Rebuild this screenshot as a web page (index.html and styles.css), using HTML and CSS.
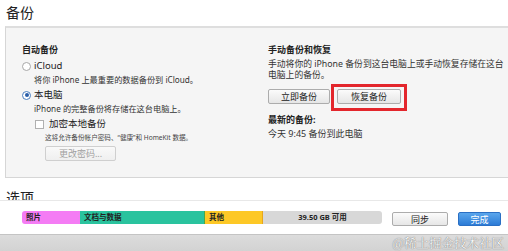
FILE: index.html
```html
<!DOCTYPE html>
<html lang="zh-CN">
<head>
    <meta charset="UTF-8">
    <meta name="viewport" content="width=device-width, initial-scale=1.0">
    <title>备份</title>
    <link rel="stylesheet" href="styles.css">
</head>
<body>
    <div class="view">
        <h1 class="page-title">备份</h1>

        <div class="panel">
            <div class="col col-auto">
                <h3 class="col-title">自动备份</h3>
                <div class="radio-row"><span class="radio"></span>iCloud</div>
                <p class="hint">将你 iPhone 上最重要的数据备份到 iCloud。</p>
                <div class="radio-row"><span class="radio on"></span>本电脑</div>
                <p class="hint">iPhone 的完整备份将存储在这台电脑上。</p>
                <div class="check-row"><span class="check"></span>加密本地备份</div>
                <p class="fine">这将允许备份帐户密码、“健康”和 HomeKit 数据。</p>
                <button class="btn btn-change" disabled>更改密码...</button>
            </div>

            <div class="col col-manual">
                <h3 class="col-title">手动备份和恢复</h3>
                <p class="desc">手动将你的 iPhone 备份到这台电脑上或手动恢复存储在这台电脑上的备份。</p>
                <div class="btn-row">
                    <button class="btn btn-backup">立即备份</button>
                    <span class="marked">
                        <button class="btn btn-restore">恢复备份</button>
                    </span>
                </div>
                <h3 class="col-title latest-title">最新的备份:</h3>
                <p class="latest">今天 9:45 备份到此电脑</p>
            </div>
        </div>

        <h1 class="page-title next-title">选项</h1>
    </div>

    <div class="footer">
        <div class="storage">
            <span class="seg seg-photo" style="width: 58px">照片</span>
            <span class="seg seg-docs" style="width: 125px">文档与数据</span>
            <span class="seg seg-other" style="width: 58px">其他</span>
            <span class="seg seg-free">39.50 GB 可用</span>
        </div>
        <button class="btn btn-sync">同步</button>
        <button class="btn btn-done">完成</button>
    </div>

    <div class="taskbar">
        <span class="watermark">@稀土掘金技术社区</span>
    </div>
</body>
</html>
```

FILE: styles.css
```css
body {
    font-family: "Noto Sans", "Noto Sans CJK SC", sans-serif;
    font-size: 9px;
    color: #333;
    background-color: #fff;
    margin: 0;
    padding: 0;
    width: 508px;
    height: 251px;
    overflow: hidden;
}

p, h1, h3 {
    margin: 0;
}

.view {
    height: 200px;
    overflow: hidden;
    padding-left: 5px;
}

.page-title {
    font-size: 14px;
    font-weight: normal;
    color: #222;
    line-height: 22px;
    padding-top: 2px;
    padding-left: 1px;
}

.next-title {
    margin-top: 9px;
    padding-top: 0;
}

.panel {
    margin-top: 2px;
    background-color: #f5f5f5;
    border-top: 2px solid #dedede;
    border-left: 1px solid #d6d6d6;
    border-bottom: 1px solid #d6d6d6;
    padding: 15px 0 0 16px;
    display: flex;
    box-sizing: border-box;
    height: 152px;
}

.col-auto {
    width: 246px;
}

.col-manual {
    width: 240px;
}

.col-title {
    font-size: 9px;
    font-weight: bold;
    color: #222;
    line-height: 14px;
    margin-bottom: 2px;
}

.radio-row,
.check-row {
    display: flex;
    align-items: center;
    line-height: 14px;
    font-size: 9.5px;
    color: #222;
}

.radio-row + .hint + .radio-row,
.check-row {
    margin-top: 1px;
}

.radio {
    width: 7px;
    height: 7px;
    border: 1px solid #a8a8a8;
    border-radius: 50%;
    background-color: #fff;
    margin-right: 3px;
    position: relative;
}

.radio.on {
    border-color: #4a7fc0;
}

.radio.on::after {
    content: "";
    position: absolute;
    left: 1.5px;
    top: 1.5px;
    width: 4px;
    height: 4px;
    border-radius: 50%;
    background-color: #2a5ea8;
}

.check {
    width: 7px;
    height: 7px;
    border: 1px solid #b0b0b0;
    background-color: #fff;
    margin: 0 5px 0 13px;
}

.hint {
    padding-left: 12px;
    font-size: 8.2px;
    line-height: 14px;
    color: #333;
}

.fine {
    padding-left: 23px;
    font-size: 6.6px;
    line-height: 13px;
    color: #444;
}

.btn {
    font-family: inherit;
    font-size: 9px;
    color: #222;
    height: 15px;
    padding: 0;
    border: 1px solid #acacac;
    border-radius: 2px;
    background: linear-gradient(#fbfbfb, #e6e6e6);
    line-height: 13px;
}

.btn-change {
    display: block;
    margin: 2px 0 0 23px;
    width: 71px;
    color: #a0a0a0;
    border-color: #cfcfcf;
    background: linear-gradient(#f9f9f9, #efefef);
}

.desc {
    font-size: 8.8px;
    line-height: 11px;
    color: #333;
    margin-top: 1px;
}

.btn-row {
    display: flex;
    gap: 7px;
    margin-top: 8px;
}

.btn-backup {
    width: 62px;
}

.btn-restore {
    width: 64px;
    display: block;
}

.marked {
    position: relative;
}

.marked::after {
    content: "";
    position: absolute;
    left: -6px;
    right: -6px;
    top: -5px;
    bottom: -7px;
    border: 3px solid #e3262c;
}

.latest-title {
    margin-top: 9px;
    margin-bottom: 0;
}

.latest {
    line-height: 14px;
    color: #333;
}

.footer {
    height: 33px;
    border-top: 1px solid #e8e8e8;
    display: flex;
    align-items: center;
    padding-left: 22px;
}

.storage {
    display: flex;
    width: 360px;
    height: 13px;
    border-radius: 3px;
    overflow: hidden;
    margin-right: 10px;
}

.seg {
    font-size: 7.5px;
    font-weight: bold;
    color: #222;
    line-height: 13px;
    padding-left: 4px;
    box-sizing: border-box;
}

.seg-photo {
    background-color: #f47cf4;
}

.seg-docs {
    background-color: #2ac39e;
    border-right: 1px solid #4aa74a;
}

.seg-other {
    background-color: #fdc826;
    border-right: 1px solid #e8a61c;
}

.seg-free {
    flex: 1;
    background-color: #d8d8d8;
    text-align: center;
    padding-left: 0;
}

.btn-sync {
    width: 56px;
    height: 14px;
    margin-right: 10px;
    margin-top: 2px;
}

.btn-done {
    width: 43px;
    height: 14px;
    margin-top: 2px;
    color: #fff;
    border-color: #2a6fc4;
    background: linear-gradient(#5aa6ec, #2c7bd6);
}

.taskbar {
    height: 17px;
    border-top: 1px solid #c4c4c4;
    background: linear-gradient(#dcdcdc, #d2d2d2);
    text-align: right;
    padding-right: 4px;
}

.watermark {
    font-family: "Noto Serif CJK SC", "Noto Sans CJK SC", serif;
    font-size: 12.5px;
    line-height: 17px;
    color: #f6f6f6;
    text-shadow: 0 0 1px #808080, 0 0 1px #808080;
}
```
